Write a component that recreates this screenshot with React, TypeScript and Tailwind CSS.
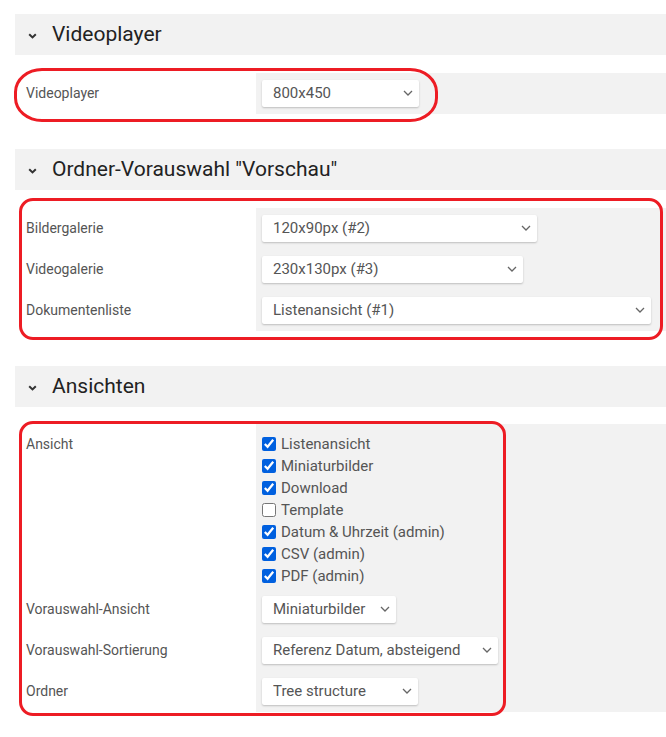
import React from 'react';

const SelectBox = ({ value, width }: { value: string; width: string }) => (
  <div className={`relative h-[27px] ${width} bg-white rounded-[2px] shadow-[0_1px_2px_rgba(0,0,0,0.22)] flex items-center pl-[11px] text-[15px] text-[#555]`}>
    <span className="truncate pr-6">{value}</span>
    <svg className="absolute right-[6px] top-[10px]" width="10" height="6" viewBox="0 0 10 6" fill="none">
      <path d="M1 1l4 4 4-4" stroke="#666" strokeWidth="1.3" />
    </svg>
  </div>
);

const Header = ({ title }: { title: string }) => (
  <div className="h-[41px] bg-[#f2f2f2] flex items-center pl-[13px]">
    <svg width="9" height="6" viewBox="0 0 9 6" fill="none" className="mt-[3px]">
      <path d="M1.2 1.2l3.3 3.2 3.3-3.2" stroke="#333" strokeWidth="2" />
    </svg>
    <h2 className="ml-[15px] text-[21px] text-[#222] mt-[1px]">{title}</h2>
  </div>
);

const Row = ({ label, children }: { label: string; children: React.ReactNode }) => (
  <div className="flex items-center">
    <div className="w-[241px] pl-[11px] text-[14px] text-[#555]">{label}</div>
    <div className="flex-1 bg-[#f2f2f2] py-[7px] pl-[6px] self-stretch">{children}</div>
  </div>
);

const views = [
  { name: 'Listenansicht', checked: true },
  { name: 'Miniaturbilder', checked: true },
  { name: 'Download', checked: true },
  { name: 'Template', checked: false },
  { name: 'Datum & Uhrzeit (admin)', checked: true },
  { name: 'CSV (admin)', checked: true },
  { name: 'PDF (admin)', checked: true },
];

export default function App() {
  return (
    <div className="relative min-h-screen bg-white pt-[14px] pl-[15px] font-['Roboto','Liberation_Sans',sans-serif]">
      <Header title="Videoplayer" />
      <div className="mt-[18px]">
        <Row label="Videoplayer">
          <SelectBox value="800x450" width="w-[157px]" />
        </Row>
      </div>

      <div className="mt-[35px]">
        <Header title={'Ordner-Vorauswahl "Vorschau"'} />
      </div>
      <div className="mt-[18px]">
        <Row label="Bildergalerie">
          <SelectBox value="120x90px (#2)" width="w-[275px]" />
        </Row>
        <Row label="Videogalerie">
          <SelectBox value="230x130px (#3)" width="w-[261px]" />
        </Row>
        <Row label="Dokumentenliste">
          <SelectBox value="Listenansicht (#1)" width="w-[389px]" />
        </Row>
      </div>

      <div className="mt-[35px]">
        <Header title="Ansichten" />
      </div>
      <div className="mt-[17px]">
        <div className="flex">
          <div className="w-[241px] pl-[11px] pt-[9px] text-[14px] leading-[22px] text-[#555]">Ansicht</div>
          <div className="flex-1 bg-[#f2f2f2] pt-[9px] pb-[2px] pl-[6px]">
            {views.map((v) => (
              <label key={v.name} className="flex items-center h-[22px] text-[15px] text-[#555]">
                <input
                  type="checkbox"
                  defaultChecked={v.checked}
                  className="m-0 w-[14px] h-[14px] accent-[#0060df]"
                />
                <span className="ml-[5px]">{v.name}</span>
              </label>
            ))}
          </div>
        </div>
        <Row label="Vorauswahl-Ansicht">
          <SelectBox value="Miniaturbilder" width="w-[134px]" />
        </Row>
        <Row label="Vorauswahl-Sortierung">
          <SelectBox value="Referenz Datum, absteigend" width="w-[236px]" />
        </Row>
        <Row label="Ordner">
          <SelectBox value="Tree structure" width="w-[156px]" />
        </Row>
      </div>

      {/* red annotation outlines */}
      <div className="absolute left-[14px] top-[68px] w-[424px] h-[54px] border-[3px] border-[#ed1c24] rounded-[28px/24px] pointer-events-none" />
      <div className="absolute left-[19px] top-[198px] w-[644px] h-[142px] border-[3px] border-[#ed1c24] rounded-[14px] pointer-events-none" />
      <div className="absolute left-[19px] top-[421px] w-[487px] h-[295px] border-[3px] border-[#ed1c24] rounded-[14px] pointer-events-none" />
    </div>
  );
}
